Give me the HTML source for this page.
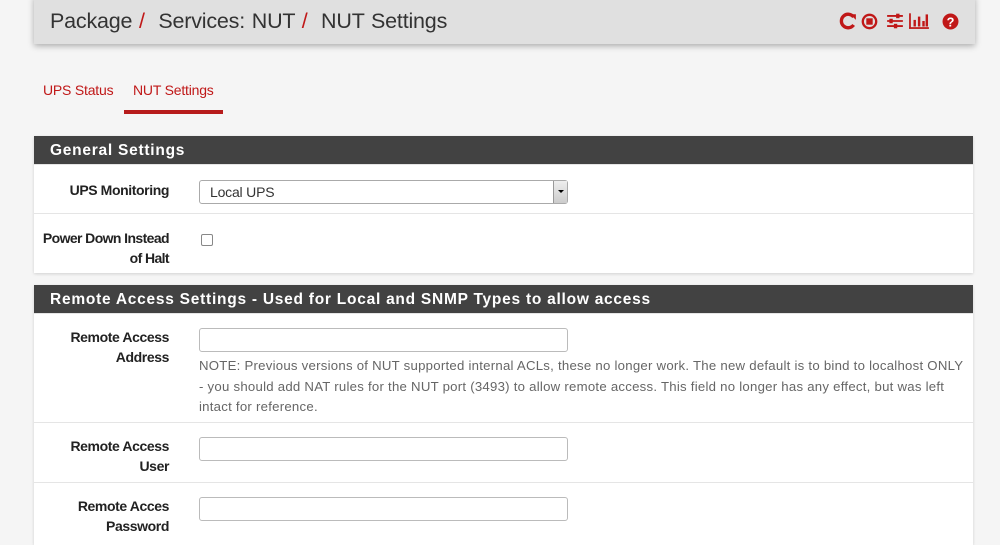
<!DOCTYPE html>
<html><head><meta charset="utf-8"><style>
*{box-sizing:border-box;margin:0;padding:0}
body{width:1000px;height:540px;overflow:hidden;background:#f5f5f5;font-family:"Liberation Sans",sans-serif;color:#222;position:relative}
.hdr{position:absolute;left:34px;top:-4px;width:941px;height:48px;background:#e0e0e0;box-shadow:0 2px 6px rgba(0,0,0,.3)}
.hdr h1{position:absolute;left:16px;top:13px;font-size:21.5px;font-weight:normal;color:#333;letter-spacing:-0.2px;word-spacing:1px}
.hdr h1 span{color:#c01818}
.icons{position:absolute;right:16px;top:16px;display:flex;gap:4px;align-items:center}
.tab{position:absolute;top:82px;font-size:14px;color:#c01818;letter-spacing:-0.2px}
.ul{position:absolute;left:124px;top:110px;width:99px;height:4px;background:#b71c1c}
.panel{position:absolute;left:34px;width:939px;background:#fff;box-shadow:0 1px 3px rgba(0,0,0,.15)}
.ph{background:#424242;color:#fff;font-weight:bold;font-size:15.5px;letter-spacing:0.75px;height:28px;line-height:29px;padding-left:16px}
.row{position:relative;border-top:1px solid #e5e5e5}
.row:first-of-type{border-top:none}
.lbl{position:absolute;left:0;width:135px;text-align:right;font-weight:bold;font-size:14px;line-height:20px;color:#222;letter-spacing:-0.4px}
.inp{position:absolute;left:165px;width:369px;height:24px;border:1px solid #bbb;border-radius:3px;background:#fff}
.note{position:absolute;left:165px;width:790px;font-size:13.2px;line-height:20.5px;color:#666;letter-spacing:0.25px;white-space:nowrap}
</style></head><body>
<div class="hdr"><h1>Package <span>/</span>&nbsp; Services: NUT <span>/</span>&nbsp; NUT Settings</h1>
<div class="icons">
<svg width="18" height="18" viewBox="0 0 16 16"><path d="M13 4.5A6 6 0 1 0 13 11.5" fill="none" stroke="#c01818" stroke-width="3"/><path d="M10 2h5v5z" fill="#c01818"/></svg>
<svg width="17" height="17" viewBox="0 0 16 16"><circle cx="8" cy="8" r="6.3" fill="none" stroke="#c01818" stroke-width="2.2"/><rect x="5" y="5" width="6" height="6" fill="#c01818"/></svg>
<svg width="18" height="18" viewBox="0 0 16 16" style="margin-left:4px"><g stroke="#c01818" stroke-width="1.6"><path d="M1 3.5h14M1 8h14M1 12.5h14"/></g><g fill="#c01818"><rect x="9" y="1.5" width="3" height="4"/><rect x="3" y="6" width="3" height="4"/><rect x="7" y="10.5" width="3" height="4"/></g></svg>
<svg width="22" height="18" viewBox="0 0 20 16"><g fill="#c01818"><rect x="1" y="1" width="1.6" height="14"/><rect x="1" y="13.6" width="18" height="1.6"/><rect x="5" y="7" width="2.2" height="6"/><rect x="9" y="4" width="2.2" height="9"/><rect x="13" y="8" width="2.2" height="5"/><rect x="16" y="2" width="2.2" height="11"/></g></svg>
<svg width="17" height="17" viewBox="0 0 16 16" style="margin-left:8px"><circle cx="8" cy="8" r="7.5" fill="#c01818"/><text x="8" y="12.5" text-anchor="middle" font-family="Liberation Sans" font-weight="bold" font-size="12" fill="#fff">?</text></svg>
</div></div>
<div class="tab" style="left:43px">UPS Status</div>
<div class="tab" style="left:133px">NUT Settings</div>
<div class="ul"></div>

<div class="panel" style="top:136px;height:137px">
<div class="ph">General Settings</div>
<div class="row" style="height:49px"><div class="lbl" style="top:15px">UPS Monitoring</div>
<div class="inp" style="top:15px;height:24px;border-color:#aaa;font-size:14px;line-height:22px;padding-left:10px;color:#333;letter-spacing:-0.2px">Local UPS
<div style="position:absolute;right:0;top:0;width:14px;height:22px;background:linear-gradient(#eee,#ccc);border-left:1px solid #999"><div style="position:absolute;left:4px;top:9px;border:3px solid transparent;border-top:3px solid #000"></div></div></div></div>
<div class="row" style="height:60px"><div class="lbl" style="top:14px;letter-spacing:-0.6px">Power Down Instead<br>of Halt</div>
<div style="position:absolute;left:167px;top:20px;width:12px;height:12px;border:1px solid #888;border-radius:2px"></div></div>
</div>

<div class="panel" style="top:285px;height:260px">
<div class="ph">Remote Access Settings - Used for Local and SNMP Types to allow access</div>
<div class="row" style="height:109px"><div class="lbl" style="top:13px">Remote Access<br>Address</div>
<div class="inp" style="top:14px"></div>
<div class="note" style="top:42px">NOTE: Previous versions of NUT supported internal ACLs, these no longer work. The new default is to bind to localhost ONLY<br>- you should add NAT rules for the NUT port (3493) to allow remote access. This field no longer has any effect, but was left<br>intact for reference.</div></div>
<div class="row" style="height:60px"><div class="lbl" style="top:13px">Remote Access<br>User</div><div class="inp" style="top:14px"></div></div>
<div class="row" style="height:60px"><div class="lbl" style="top:13px">Remote Acces<br>Password</div><div class="inp" style="top:14px"></div></div>
</div>
</body></html>
